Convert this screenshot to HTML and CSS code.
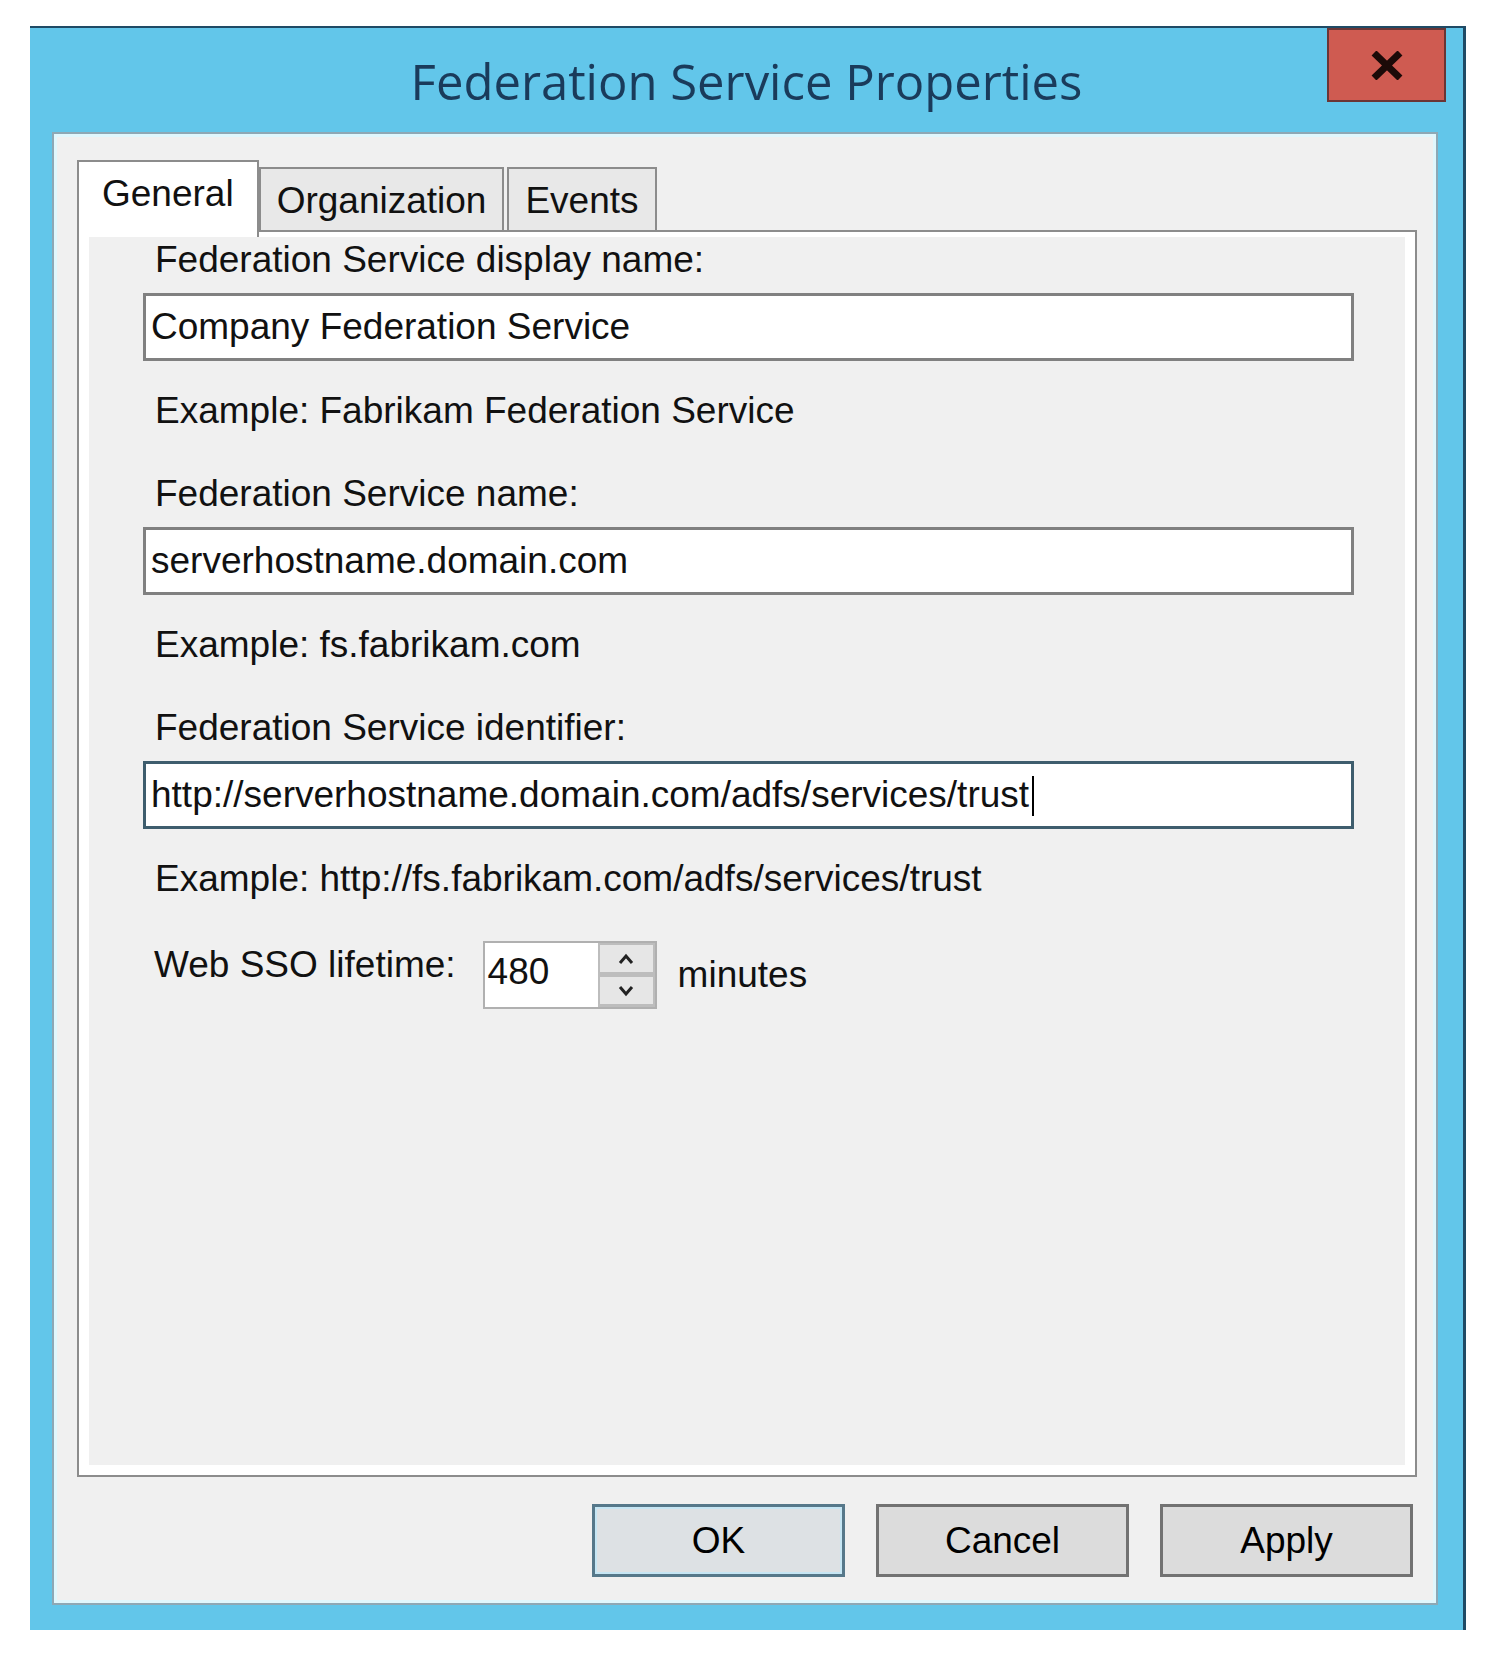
FILE: index.html
```html
<!DOCTYPE html>
<html lang="en">
<head>
<meta charset="utf-8">
<title>Federation Service Properties</title>
<link rel="stylesheet" href="styles.css">
</head>
<body>
<div class="window">
  <div class="titlebar">
    <div class="title">Federation Service Properties</div>
    <button class="close" aria-label="Close">
      <svg width="32" height="29" viewBox="0 0 32 29" aria-hidden="true">
        <path d="M3 2 L29 27 M29 2 L3 27" stroke="#1c0a08" stroke-width="7" fill="none"/>
      </svg>
    </button>
  </div>
  <div class="client">
    <div class="tabs">
      <div class="tab active">General</div>
      <div class="tab">Organization</div>
      <div class="tab tab-events">Events</div>
    </div>
    <div class="panel">
      <div class="page">
        <div class="field">
          <div class="label">Federation Service display name:</div>
          <div class="textbox">Company Federation Service</div>
          <div class="example">Example: Fabrikam Federation Service</div>
        </div>
        <div class="field">
          <div class="label">Federation Service name:</div>
          <div class="textbox">serverhostname.domain.com</div>
          <div class="example">Example: fs.fabrikam.com</div>
        </div>
        <div class="field">
          <div class="label">Federation Service identifier:</div>
          <div class="textbox focused">http://serverhostname.domain.com/adfs/services/trust<span class="caret"></span></div>
          <div class="example">Example: http://fs.fabrikam.com/adfs/services/trust</div>
        </div>
        <div class="sso-row">
          <span class="sso-label">Web SSO lifetime:</span>
          <div class="spin">
            <div class="spin-value">480</div>
            <div class="spin-btns">
              <div class="spin-btn">
                <svg width="16" height="12" viewBox="0 0 16 12" aria-hidden="true"><polyline points="2,10 8,3 14,10" fill="none" stroke="#222" stroke-width="3"/></svg>
              </div>
              <div class="spin-btn">
                <svg width="16" height="12" viewBox="0 0 16 12" aria-hidden="true"><polyline points="2,2 8,9 14,2" fill="none" stroke="#222" stroke-width="3"/></svg>
              </div>
            </div>
          </div>
          <span class="sso-unit">minutes</span>
        </div>
      </div>
    </div>
    <div class="actions">
      <button class="btn btn-default">OK</button>
      <button class="btn">Cancel</button>
      <button class="btn">Apply</button>
    </div>
  </div>
</div>
</body>
</html>
```

FILE: styles.css
```css
* { box-sizing: border-box; }

html, body {
  margin: 0;
  padding: 0;
}

body {
  background: #ffffff;
  width: 1500px;
  height: 1658px;
  font-family: "Liberation Sans", Arial, sans-serif;
  font-size: 37px;
  line-height: 42px;
  color: #111111;
}

.window {
  margin: 26px 0 0 30px;
  width: 1436px;
  height: 1604px;
  background: #62c6ea;
  border-top: 2px solid #1f4a65;
  border-right: 3px solid #1f4a65;
  display: flex;
  flex-direction: column;
}

.titlebar {
  height: 104px;
  display: grid;
  grid-template-columns: 1fr auto 1fr;
  align-items: start;
}

.title {
  grid-column: 2;
  font-family: "Open Sans", "Noto Sans", sans-serif;
  font-size: 49px;
  line-height: 66px;
  color: #1a3b5b;
  padding-top: 20px;
  white-space: nowrap;
}

.close {
  grid-column: 3;
  justify-self: end;
  margin: 0 17px 0 0;
  width: 119px;
  height: 74px;
  padding: 0;
  background: #cf5b51;
  border: 2px solid #6b3535;
  display: flex;
  align-items: center;
  justify-content: center;
}

.client {
  flex: 1;
  margin: 0 25px 25px 22px;
  background: #f0f0f0;
  border: 2px solid #8ea8b5;
  box-shadow: inset 0 0 0 3px #e0f7fd;
  padding: 26px 19px 26px 23px;
  display: flex;
  flex-direction: column;
}

.tabs {
  height: 70px;
  display: flex;
  align-items: flex-end;
}

.tab {
  height: 63px;
  padding: 11px 16px 0 16px;
  background: #e8e8e8;
  border: 2px solid #8c8c8c;
  border-bottom: none;
  white-space: nowrap;
}

.tab.active {
  position: relative;
  z-index: 1;
  height: 77px;
  margin-bottom: -7px;
  padding: 11px 23px 0 23px;
  background: #ffffff;
}

.tab-events {
  margin-left: 3px;
}

.panel {
  flex: 1;
  display: flex;
  background: #ffffff;
  border: 2px solid #8c8c8c;
  padding: 5px 10px 10px 10px;
}

.page {
  flex: 1;
  background: #f0f0f0;
  padding: 2px 51px 0 54px;
}

.label,
.example {
  padding-left: 12px;
  white-space: nowrap;
}

.textbox {
  margin-top: 12px;
  height: 68px;
  background: #ffffff;
  border: 3px solid #808080;
  padding: 10px 5px;
  white-space: nowrap;
}

.textbox.focused {
  border-color: #3e5d6d;
}

.caret {
  display: inline-block;
  width: 2px;
  height: 40px;
  margin-left: 3px;
  background: #000000;
  vertical-align: -9px;
}

.example {
  margin-top: 29px;
}

.field + .field {
  margin-top: 41px;
}

.sso-row {
  margin-top: 41px;
  padding-left: 11px;
  display: flex;
  align-items: flex-start;
}

.sso-label {
  margin-top: 3px;
  margin-right: 27px;
  white-space: nowrap;
}

.spin {
  width: 174px;
  height: 68px;
  display: flex;
  background: #ffffff;
  border: 2px solid #b0b0b0;
}

.spin-value {
  width: 113px;
  padding: 8px 0 0 3px;
}

.spin-btns {
  flex: 1;
  display: flex;
  flex-direction: column;
  gap: 5px;
  padding: 2px 2px 3px 2px;
  background: #bdbdbd;
}

.spin-btn {
  flex: 1;
  background: #e6e6e6;
  display: flex;
  align-items: center;
  justify-content: center;
}

.sso-unit {
  margin-top: 13px;
  margin-left: 21px;
}

.actions {
  margin-top: 27px;
  padding-right: 4px;
  display: flex;
  justify-content: flex-end;
  gap: 31px;
}

.btn {
  width: 253px;
  height: 73px;
  padding: 0;
  font: inherit;
  color: #000000;
  background: #dcdcdc;
  border: 3px solid #727272;
}

.btn-default {
  background: #dde1e4;
  border-color: #56788a;
  box-shadow: inset 0 0 0 2px #c6e6f4;
}
```
